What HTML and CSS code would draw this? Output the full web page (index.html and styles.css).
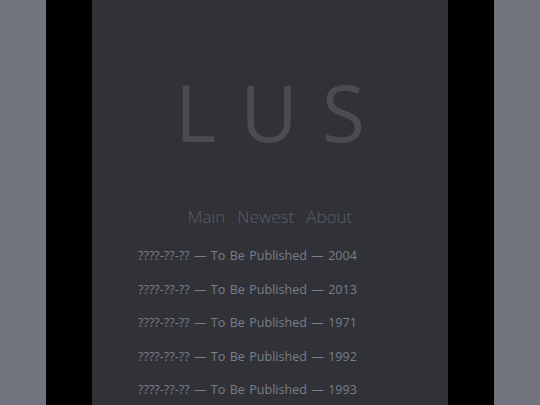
FILE: index.html
```html
<!DOCTYPE html>
<html>
<head>
<meta charset="utf-8">
<link rel="stylesheet" href="styles.css">
</head>
<body>
<div class="frame">
  <div class="panel">
    <h1 class="title">LUS</h1>
    <nav class="nav">
      <a href="#">Main</a>
      <a href="#">Newest</a>
      <a href="#">About</a>
    </nav>
    <ul class="posts">
      <li>????-??-?? — To Be Published — 2004</li>
      <li>????-??-?? — To Be Published — 2013</li>
      <li>????-??-?? — To Be Published — 1971</li>
      <li>????-??-?? — To Be Published — 1992</li>
      <li>????-??-?? — To Be Published — 1993</li>
    </ul>
  </div>
</div>
</body>
</html>
```
FILE: styles.css
```css
html, body {
  margin: 0;
  padding: 0;
  height: 100%;
  overflow: hidden;
}
body {
  background: #71737e;
  font-family: "Open Sans", "Noto Sans", sans-serif;
}
.frame {
  width: 356px;
  margin: 0 46px;
  padding: 0 46px;
  background: #000;
  height: 100%;
}
.panel {
  background: #313238;
  height: 100%;
  display: flex;
  flex-direction: column;
}
.title {
  margin: 64px 0 0 0;
  text-align: center;
  font-weight: 400;
  font-size: 79px;
  line-height: 96px;
  letter-spacing: 24px;
  padding-left: 24px;
  color: #4b4b50;
}
.nav {
  margin-top: 45px;
  display: flex;
  justify-content: center;
  gap: 12px;
}
.nav a {
  color: #5a5c66;
  text-decoration: none;
  font-size: 17px;
  font-weight: 300;
  line-height: 24px;
}
.posts {
  list-style: none;
  margin: 17px 0 0 46px;
  padding: 0;
  display: flex;
  flex-direction: column;
  gap: 13.5px;
}
.posts li {
  color: #7b7d88;
  font-size: 12.5px;
  line-height: 20px;
  letter-spacing: 0.05px;
  word-spacing: 1px;
}
```
